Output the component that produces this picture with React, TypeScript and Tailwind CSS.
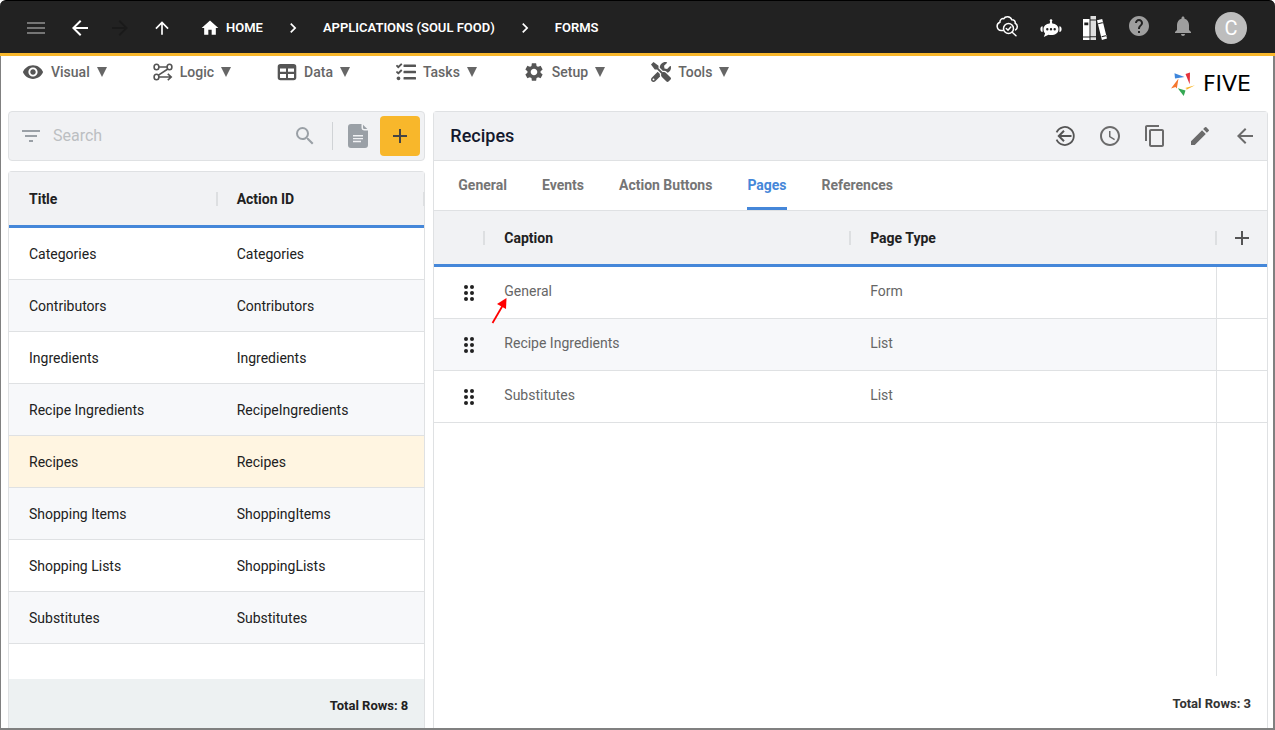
import React, { useState } from 'react';
import { FaTasks, FaTools } from 'react-icons/fa';
import {
  MdAccessTime,
  MdAdd,
  MdArrowBack,
  MdArrowForward,
  MdArrowUpward,
  MdChevronRight,
  MdContentCopy,
  MdEdit,
  MdFilterList,
  MdHelp,
  MdHome,
  MdMenu,
  MdNotifications,
  MdSearch,
  MdSettings,
  MdVisibility,
} from 'react-icons/md';

const forms = [
  { title: 'Categories', actionId: 'Categories' },
  { title: 'Contributors', actionId: 'Contributors' },
  { title: 'Ingredients', actionId: 'Ingredients' },
  { title: 'Recipe Ingredients', actionId: 'RecipeIngredients' },
  { title: 'Recipes', actionId: 'Recipes' },
  { title: 'Shopping Items', actionId: 'ShoppingItems' },
  { title: 'Shopping Lists', actionId: 'ShoppingLists' },
  { title: 'Substitutes', actionId: 'Substitutes' },
];

const pages = [
  { caption: 'General', type: 'Form' },
  { caption: 'Recipe Ingredients', type: 'List' },
  { caption: 'Substitutes', type: 'List' },
];

const tabs = ['General', 'Events', 'Action Buttons', 'Pages', 'References'];

function LogicIcon() {
  return (
    <svg viewBox="0 0 20 20" className="h-5 w-5" fill="none" stroke="currentColor" strokeWidth="1.6">
      <ellipse cx="3.5" cy="5" rx="2.4" ry="2.8" />
      <ellipse cx="16.5" cy="5" rx="2.4" ry="2.8" />
      <ellipse cx="3.5" cy="15" rx="2.4" ry="2.8" />
      <path d="M6 5h8M14.8 7 5.5 13.2M6 15h12M14.8 11.8 18.2 15l-3.4 3.2" />
    </svg>
  );
}

function DataIcon() {
  return (
    <svg viewBox="0 0 20 20" className="h-5 w-5" fill="currentColor">
      <path
        fillRule="evenodd"
        d="M3.5 2h13A2.8 2.8 0 0 1 19.3 4.8v10.700A2.8 2.8 0 0 1 16.5 18.3h-13A2.8 2.8 0 0 1 .7 15.5V4.800A2.8 2.8 0 0 1 3.5 2ZM3 6.600v3.200h6V6.600H3Zm8 0v3.200h6V6.600h-6ZM3 12v3.500c0 .4.3.6.7.6H9V12H3Zm8 0v4.100h5.300c.4 0 .7-.2.7-.6V12h-6Z"
      />
    </svg>
  );
}

function CloudSearchIcon() {
  return (
    <svg viewBox="0 0 24 24" className="h-6 w-6" fill="none" stroke="currentColor" strokeWidth="1.5" strokeLinecap="round">
      <path d="M8 16.500H6.200a4.300 4.300 0 0 1-1.300-8.300C4.800 5.500 7 4.200 8.800 4.700 10 2.200 15.300 1.600 16.800 5.800c2.400-.2 3.700 1.500 3.400 3.400 2.600 1.200 2.800 5.300.3 6.700" />
      <circle cx="13.500" cy="14.500" r="5" />
      <path d="m11.300 14.500 1.700 1.700 2.800-3.200M17.200 18.300l3.800 3.400" />
    </svg>
  );
}

function RobotIcon() {
  return (
    <svg viewBox="0 0 24 24" className="h-6 w-6" fill="currentColor">
      <circle cx="12" cy="4.500" r="1.300" />
      <path
        fillRule="evenodd"
        d="M11.300 5h1.400l.6 2.500c3.900.4 6.200 2.600 6.200 5.700 0 3.700-3 5.800-7.500 5.800-1 0-1.700-.1-2.500-.3L4.800 21l1.300-3.600c-1.100-1.100-1.600-2.500-1.600-4.200 0-3.100 2.300-5.300 6.200-5.700L11.300 5ZM8.300 12a1.200 1.200 0 1 0 0 2.400 1.200 1.200 0 0 0 0-2.400Zm3.700 0a1.200 1.200 0 1 0 0 2.400 1.200 1.200 0 0 0 0-2.400Zm3.700 0a1.200 1.200 0 1 0 0 2.400 1.200 1.200 0 0 0 0-2.400Z"
      />
      <path d="M3.600 10.200v5.800c-1.400 0-2.200-1-2.200-2.900s.8-2.900 2.200-2.900ZM20.400 10.200v5.800c1.400 0 2.200-1 2.200-2.900s-.8-2.900-2.200-2.900Z" />
    </svg>
  );
}

function BooksIcon() {
  return (
    <svg viewBox="1 0 24 26" className="h-[26px] w-6" fill="currentColor">
      <path fillRule="evenodd" d="M1 4h6.500v21H1V4Zm1.300 3.500v2.800h4V7.500h-4ZM1 21.500v1h6.500v-1H1Z" />
      <path fillRule="evenodd" d="M8.500 1h5.500v24H8.500V1Zm0 3.500v.9H14v-.9H8.500Zm0 16.800v.9H14v-.9H8.500Z" opacity=".85" />
      <path fillRule="evenodd" d="m15 5.300 5.200-1.400 4.800 19.500-5.100 1.500L15 5.300Zm1 3 .3 1 5-1.300-.3-1-5 1.300Zm3.500 13 .3 1 5-1.300-.3-1-5 1.300Z" />
    </svg>
  );
}

function DocumentIcon() {
  return (
    <svg viewBox="0 0 20 24" className="h-6 w-5" fill="currentColor">
      <path
        fillRule="evenodd"
        d="M3 0h10.500v3.500a3 3 0 0 0 3 3H20V21a3 3 0 0 1-3 3H3a3 3 0 0 1-3-3V3a3 3 0 0 1 3-3Zm2 11v1.500h10V11H5Zm0 2.900v1.400h10v-1.400H5Zm0 2.900v1.400h8v-1.400H5Z"
      />
      <path d="M15 .8 19.300 5h-3.100A1.200 1.200 0 0 1 15 3.800V.8Z" />
    </svg>
  );
}

// Circle with a gap on the left that the arrow leaves through
function ReturnIcon() {
  return (
    <svg viewBox="0 0 24 24" className="h-6 w-6" fill="none" stroke="currentColor" strokeWidth="1.8">
      <path d="M3.600 8.300a9 9 0 1 1 0 7.400" />
      <path d="M18.500 12H6M11 6.800 5.800 12l5.200 5.200" strokeWidth="2" />
    </svg>
  );
}

function DragIcon() {
  return (
    <svg viewBox="0 0 10 16" className="h-4 w-[10px]" fill="currentColor">
      {[2, 8, 14].map((y) => (
        <React.Fragment key={y}>
          <circle cx="2" cy={y} r="2" />
          <circle cx="8" cy={y} r="2" />
        </React.Fragment>
      ))}
    </svg>
  );
}

function Logo() {
  return (
    <a href="#" className="flex items-center gap-2 text-black">
      <svg viewBox="0 0 24 24" className="h-6 w-6">
        <path fill="#3f86db" d="M3.500 1.200 13.500 5 4 6.500Z" />
        <path fill="#e5323b" d="M14.500 2 19 .5l-.3 11.800Z" />
        <path fill="#f8b72b" d="m24 13.300-8.500 4.500-.2-1.800-2 .2Z" />
        <path fill="#34a853" d="m6.800 16.300 7.700 2.200-1.800 5.500Z" />
        <path fill="#f4772e" d="m7.500 6.500-1.700 10-1.300-1.500-4.500 1.500Z" />
      </svg>
      <span className="font-['DejaVu_Sans',sans-serif] text-[22px] leading-6">FIVE</span>
    </a>
  );
}

const menus = [
  { label: 'Visual', icon: <MdVisibility className="h-[22px] w-[22px]" /> },
  { label: 'Logic', icon: <LogicIcon /> },
  { label: 'Data', icon: <DataIcon /> },
  { label: 'Tasks', icon: <FaTasks className="h-5 w-5" /> },
  { label: 'Setup', icon: <MdSettings className="h-[22px] w-[22px]" /> },
  { label: 'Tools', icon: <FaTools className="h-5 w-5" /> },
];

function TopBar() {
  return (
    <header className="flex h-14 items-center justify-between rounded-t-md border-t border-b-3 border-t-black border-b-[#f8b72b] bg-[#222] pt-0.5 pr-7 pl-6 text-white">
      <div className="flex items-center">
        <button aria-label="Menu" className="text-[#757575]">
          <MdMenu className="h-6 w-6" />
        </button>
        <button aria-label="Back" className="ml-5">
          <MdArrowBack className="h-6 w-6" />
        </button>
        <button aria-label="Forward" className="ml-4 text-[#1a1a1a]" disabled>
          <MdArrowForward className="h-6 w-6" />
        </button>
        <button aria-label="Up" className="ml-5">
          <MdArrowUpward className="h-5 w-5" />
        </button>
        <nav aria-label="Breadcrumb" className="ml-7 flex items-center text-[13px] font-semibold">
          <a href="#" className="flex items-center gap-1.5">
            <MdHome className="h-5 w-5" />
            HOME
          </a>
          <MdChevronRight className="mx-5 h-5 w-5" />
          <a href="#">APPLICATIONS (SOUL FOOD)</a>
          <MdChevronRight className="mx-5 h-5 w-5" />
          <a href="#">FORMS</a>
        </nav>
      </div>
      <div className="flex items-center gap-5">
        <button aria-label="Inspector" className="-mt-1">
          <CloudSearchIcon />
        </button>
        <button aria-label="Assistant">
          <RobotIcon />
        </button>
        <button aria-label="Library">
          <BooksIcon />
        </button>
        <button aria-label="Help" className="-mt-1 text-[#9e9e9e]">
          <MdHelp className="h-6 w-6" />
        </button>
        <button aria-label="Notifications" className="-mt-1 text-[#9e9e9e]">
          <MdNotifications className="h-6 w-6" />
        </button>
        <button className="flex h-8 w-8 items-center justify-center rounded-full bg-[#bdbdbd] text-xl">C</button>
      </div>
    </header>
  );
}

function MenuBar() {
  return (
    <div className="flex h-[55px] items-start justify-between pr-[22px] pl-[21px]">
      <nav className="mt-1 flex items-center gap-[46px] text-[#666]">
        {menus.map((menu) => (
          <button key={menu.label} className="flex h-6 items-center gap-[7px] text-sm font-medium">
            <span className="text-[#555]">{menu.icon}</span>
            <span>{menu.label}</span>
            <svg viewBox="0 0 10 10" className="h-[10px] w-[10px]" fill="currentColor">
              <path d="M0 0h10L5 10Z" />
            </svg>
          </button>
        ))}
      </nav>
      <div className="mt-4">
        <Logo />
      </div>
    </div>
  );
}

function HeaderCell({ children }: { children?: React.ReactNode }) {
  return (
    <th scope="col" className="h-14 border-b-3 border-[#4587d9] p-0 text-left font-bold">
      <div className="-mr-px flex h-[14px] items-center justify-between">
        <span className="pl-5">{children}</span>
        <span className="h-[14px] w-0.5 bg-[#dddfe1]" />
      </div>
    </th>
  );
}

function FormList() {
  const [selected, setSelected] = useState('Recipes');

  return (
    <section className="flex min-w-0 flex-col">
      <div className="flex h-[50px] items-center rounded border border-[#dfe1e3] bg-[#f1f2f4] pr-1 pl-[10px] text-[#9aa0a6]">
        <button aria-label="Filter">
          <MdFilterList className="h-6 w-6" />
        </button>
        <input
          type="text"
          aria-label="Search"
          placeholder="Search"
          className="ml-[10px] min-w-0 flex-1 bg-transparent text-base text-gray-800 outline-none placeholder:text-[#bcbfc2]"
        />
        <button aria-label="Run search">
          <MdSearch className="h-6 w-6" />
        </button>
        <span className="mx-[15px] h-7 w-px bg-[#d0d3d6]" />
        <button aria-label="Documentation">
          <DocumentIcon />
        </button>
        <button aria-label="Add form" className="ml-3 flex h-10 w-10 items-center justify-center rounded bg-[#f8b72b] text-[#444]">
          <MdAdd className="h-6 w-6" />
        </button>
      </div>

      <div className="mt-[10px] flex flex-1 flex-col rounded-t border border-b-0 border-[#dfe1e3]">
        <table className="w-full table-fixed border-separate border-spacing-0 text-sm text-[#212121]">
          <thead>
            <tr className="bg-[#f1f2f4]">
              <HeaderCell>Title</HeaderCell>
              <HeaderCell>Action ID</HeaderCell>
            </tr>
          </thead>
          <tbody>
            {forms.map((form) => (
              <tr
                key={form.title}
                onClick={() => setSelected(form.title)}
                className={form.title === selected ? 'bg-[#fff5e1]' : 'even:bg-[#f7f8fa]'}
              >
                <td className="h-[52px] border-b border-[#dfe1e3] py-0 pl-5">{form.title}</td>
                <td className="h-[52px] border-b border-[#dfe1e3] py-0 pl-5">{form.actionId}</td>
              </tr>
            ))}
          </tbody>
        </table>
        <div className="flex-1" />
        <div className="flex h-[49px] items-center justify-end bg-[#edf1f2] pt-1 pr-4 text-[13px] font-bold text-[#212121]">
          Total Rows: {forms.length}
        </div>
      </div>
    </section>
  );
}

function PageTable() {
  return (
    <>
      <table className="w-full table-fixed border-separate border-spacing-0 text-sm text-[#666]">
        <colgroup>
          <col className="w-[50px]" />
          <col />
          <col />
          <col className="w-[51px]" />
        </colgroup>
        <thead>
          <tr className="bg-[#f1f2f4] text-[#212121]">
            <HeaderCell />
            <HeaderCell>Caption</HeaderCell>
            <HeaderCell>Page Type</HeaderCell>
            <th className="border-b-3 border-[#4587d9] p-0">
              <button aria-label="Add page" className="flex w-full justify-center text-[#555]">
                <MdAdd className="h-6 w-6" />
              </button>
            </th>
          </tr>
        </thead>
        <tbody>
          {pages.map((page, index) => (
            <tr key={page.caption} className="even:bg-[#f7f8fa]">
              <td className="h-[52px] border-b border-[#dfe1e3] p-0">
                <button aria-label={`Move ${page.caption}`} className="ml-[30px] flex text-[#212121]">
                  <DragIcon />
                </button>
              </td>
              <td className="border-b border-[#dfe1e3] pt-0 pb-1 pl-5">
                <span className="relative">
                  {page.caption}
                  {index === 0 && (
                    <svg viewBox="0 0 18 28" className="absolute top-3.5 -left-[13px] h-7 w-[18px]">
                      <path d="M1.500 26 12 8" stroke="#f00" strokeWidth="1.800" />
                      <path d="M15.500 1 15 12 6 7Z" fill="#f00" />
                    </svg>
                  )}
                </span>
              </td>
              <td className="border-b border-[#dfe1e3] pt-0 pb-1 pl-5">{page.type}</td>
              <td className="border-b border-l border-[#dfe1e3] bg-white p-0" />
            </tr>
          ))}
        </tbody>
      </table>
      <div className="mr-[50px] flex-1 border-r border-[#dfe1e3]" />
      <div className="flex h-[52px] items-center justify-end pt-1 pr-4 text-[13px] font-bold text-[#333]">
        Total Rows: {pages.length}
      </div>
    </>
  );
}

function FormDetail() {
  const [activeTab, setActiveTab] = useState('Pages');

  return (
    <section className="flex min-w-0 flex-col rounded-t border border-b-0 border-[#dfe1e3]">
      <div className="flex h-[49px] items-center justify-between border-b border-[#dfe1e3] bg-[#f1f2f4] pr-[10px] pl-4">
        <h1 className="text-lg font-medium text-[#14192d]">Recipes</h1>
        <div className="flex items-center gap-[21px] text-[#6b6b6b]">
          <button aria-label="Return" className="text-[#555]">
            <ReturnIcon />
          </button>
          <button aria-label="History">
            <MdAccessTime className="h-6 w-6" />
          </button>
          <button aria-label="Copy">
            <MdContentCopy className="h-6 w-6" />
          </button>
          <button aria-label="Edit">
            <MdEdit className="h-6 w-6" />
          </button>
          <button aria-label="Close">
            <MdArrowBack className="h-6 w-6" />
          </button>
        </div>
      </div>
      <div role="tablist" className="flex h-[50px] gap-[35px] border-b border-[#dfe1e3] pl-6 text-sm font-bold">
        {tabs.map((tab) => (
          <button
            key={tab}
            role="tab"
            aria-selected={tab === activeTab}
            onClick={() => setActiveTab(tab)}
            className={`border-b-3 pt-0.5 ${
              tab === activeTab ? 'border-[#4587d9] text-[#4587d9]' : 'border-transparent text-[#757575]'
            }`}
          >
            {tab}
          </button>
        ))}
      </div>
      <PageTable />
    </section>
  );
}

export default function App() {
  return (
    <div className="flex min-h-screen flex-col bg-white font-['Roboto',sans-serif]">
      <TopBar />
      <div className="flex flex-1 flex-col border-r-2 border-b-2 border-l border-[#808080]">
        <MenuBar />
        <main className="grid flex-1 grid-cols-[1fr_2fr] gap-2 pr-[5px] pl-[7px]">
          <FormList />
          <FormDetail />
        </main>
      </div>
    </div>
  );
}
